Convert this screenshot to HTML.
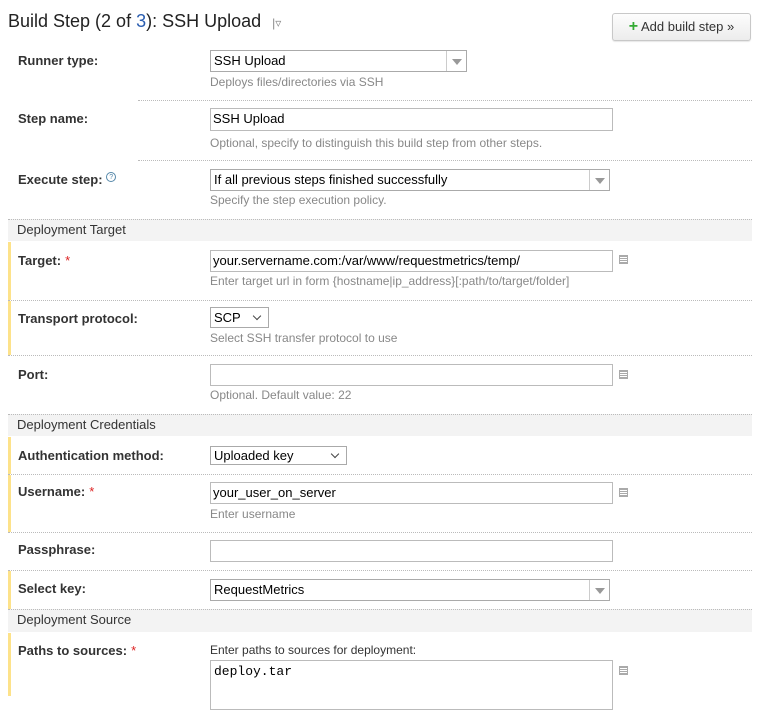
<!DOCTYPE html>
<html><head><style>
*{box-sizing:border-box;margin:0;padding:0}
body{width:762px;height:696px;overflow:hidden;background:#fff;font-family:"Liberation Sans",Arial,sans-serif;font-size:13px;color:#222;position:relative}
.a{position:absolute;white-space:nowrap}
.lbl{position:absolute;left:18px;font-weight:bold;font-size:13px;color:#333}
.star{color:#d22;font-weight:normal;margin-left:4px}
.desc{position:absolute;left:210px;font-size:12px;color:#888}
.inp{position:absolute;left:210px;border:1px solid #bbb;background:#fff;padding:2px 2px;font-size:13px;color:#000;line-height:16px}
.sel{position:absolute;left:210px;border:1px solid #aaa;background:#fff;padding:2px 3px;font-size:13px;color:#000;line-height:16px}
.sel .arr{position:absolute;right:0;top:0;bottom:0;width:20px;border-left:1px solid #ccc}
.sel .arr:after{content:"";position:absolute;left:5px;top:8px;border:5px solid transparent;border-top:6px solid #999;border-bottom:0}
.sel .chev{position:absolute;right:8px;top:50%;width:6px;height:6px;margin-top:-5px;border-right:1px solid #444;border-bottom:1px solid #444;transform:rotate(45deg)}
.dot{position:absolute;right:10px;height:0;border-top:1px dotted #bbb}
.sec{position:absolute;left:8px;right:10px;height:20px;background:#f3f3f3;font-size:13px;color:#333;padding-left:9px;line-height:20px;border-top:1px dotted #bbb}
.bar{position:absolute;left:8px;width:3px;background:#fde28a}
.ic{position:absolute;left:619px;width:9px;height:9px;border:1px solid #aaa;background:repeating-linear-gradient(#aaa 0 1px,#fff 1px 2px)}
</style></head><body>
<div class="a" style="left:8px;top:11px;font-size:18px;color:#222">Build Step (2 of <span style="color:#2a5db0">3</span>): SSH Upload <span style="font-size:12px;color:#888;margin-left:6px">|▿</span></div>
<div class="a" style="left:612px;top:13px;width:139px;height:28px;border:1px solid #c8c8c8;border-radius:3px;background:linear-gradient(#fdfdfd,#ececec);font-size:13px;color:#333;line-height:26px;text-align:center;box-shadow:0 1px 1px rgba(0,0,0,.1)"><span style="color:#3a3;font-weight:bold;font-size:16px">+</span> Add build step »</div>

<div class="lbl" style="top:53px">Runner type:</div>
<div class="sel" style="top:50px;width:257px;height:22px">SSH Upload<span class="arr"></span></div>
<div class="desc" style="top:75px">Deploys files/directories via SSH</div>
<div class="dot" style="left:138px;top:100px"></div>

<div class="lbl" style="top:111px">Step name:</div>
<div class="inp" style="top:108px;width:403px;height:23px">SSH Upload</div>
<div class="desc" style="top:136px">Optional, specify to distinguish this build step from other steps.</div>
<div class="dot" style="left:138px;top:160px"></div>

<div class="lbl" style="top:172px">Execute step: <span style="display:inline-block;width:10px;height:10px;border:1px solid #58a;border-radius:50%;font-size:7px;color:#58a;text-align:center;line-height:9px;vertical-align:top;font-weight:normal">?</span></div>
<div class="sel" style="top:169px;width:400px;height:22px">If all previous steps finished successfully<span class="arr"></span></div>
<div class="desc" style="top:193px">Specify the step execution policy.</div>

<div class="sec" style="top:219px;height:22px">Deployment Target</div>

<div class="bar" style="top:242px;height:58px"></div>
<div class="lbl" style="top:253px">Target:<span class="star">*</span></div>
<div class="inp" style="top:250px;width:403px;height:22px">your.servername.com:/var/www/requestmetrics/temp/</div>
<div class="ic" style="top:255px"></div>
<div class="desc" style="top:274px">Enter target url in form {hostname|ip_address}[:path/to/target/folder]</div>
<div class="dot" style="left:8px;top:300px"></div>

<div class="bar" style="top:301px;height:54px"></div>
<div class="lbl" style="top:311px">Transport protocol:</div>
<div class="sel" style="top:307px;width:59px;height:21px">SCP<span class="chev"></span></div>
<div class="desc" style="top:331px">Select SSH transfer protocol to use</div>
<div class="dot" style="left:8px;top:355px"></div>

<div class="lbl" style="top:367px">Port:</div>
<div class="inp" style="top:364px;width:403px;height:22px"></div>
<div class="ic" style="top:370px"></div>
<div class="desc" style="top:388px">Optional. Default value: 22</div>

<div class="sec" style="top:414px;height:22px">Deployment Credentials</div>

<div class="bar" style="top:437px;height:37px"></div>
<div class="lbl" style="top:448px">Authentication method:</div>
<div class="sel" style="top:446px;width:137px;height:19px;line-height:14px">Uploaded key<span class="chev"></span></div>
<div class="dot" style="left:8px;top:474px"></div>

<div class="bar" style="top:475px;height:57px"></div>
<div class="lbl" style="top:484px">Username:<span class="star">*</span></div>
<div class="inp" style="top:482px;width:403px;height:22px">your_user_on_server</div>
<div class="ic" style="top:488px"></div>
<div class="desc" style="top:507px">Enter username</div>
<div class="dot" style="left:8px;top:532px"></div>

<div class="lbl" style="top:542px">Passphrase:</div>
<div class="inp" style="top:540px;width:403px;height:22px"></div>
<div class="dot" style="left:8px;top:570px"></div>

<div class="bar" style="top:571px;height:38px"></div>
<div class="lbl" style="top:581px">Select key:</div>
<div class="sel" style="top:579px;width:400px;height:22px">RequestMetrics<span class="arr"></span></div>

<div class="sec" style="top:609px;height:23px">Deployment Source</div>

<div class="bar" style="top:633px;height:63px"></div>
<div class="lbl" style="top:643px">Paths to sources:<span class="star">*</span></div>
<div class="a" style="left:210px;top:643px;font-size:12px;color:#333">Enter paths to sources for deployment:</div>
<div class="inp" style="top:660px;width:403px;height:50px;font-family:'Liberation Mono',monospace;font-size:13px;padding:3px">deploy.tar</div>
<div class="ic" style="top:666px"></div>
</body></html>
